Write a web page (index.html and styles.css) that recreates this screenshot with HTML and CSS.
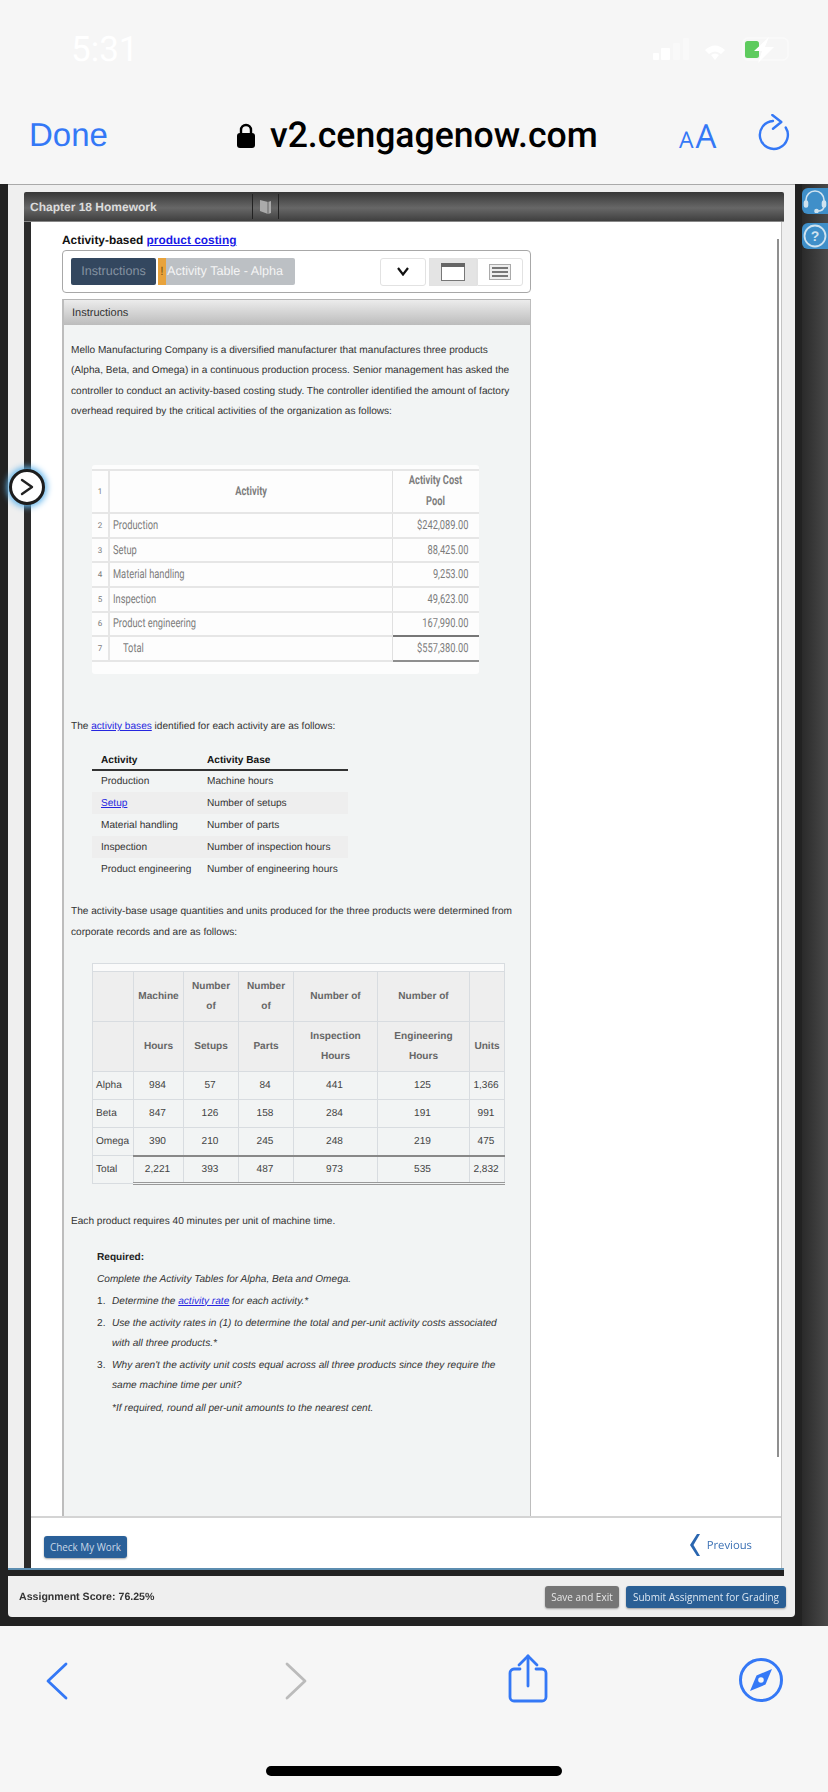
FILE: index.html
```html
<!DOCTYPE html>
<html lang="en">
<head>
<meta charset="utf-8">
<title>Chapter 18 Homework</title>
<link rel="stylesheet" href="styles.css">
</head>
<body>
<header class="topbar">
  <div class="status">
    <span class="time">5:31</span>
    <svg class="status-icons" width="145" height="30" viewBox="0 0 145 30">
      <rect x="3" y="19" width="6" height="7" rx="1" fill="#fff"/>
      <rect x="11" y="14" width="9" height="12" rx="1" fill="#fff"/>
      <rect x="23" y="9" width="7" height="17" rx="1" fill="#f9f9f9"/>
      <rect x="33" y="4" width="6" height="22" rx="1" fill="#f9f9f9"/>
      <path d="M55 16 Q65 7 75 16 L71 20 Q65 15 59 20Z" fill="#fff"/>
      <path d="M61 21 Q65 18 69 21 L65 26Z" fill="#fff"/>
      <rect x="93" y="4" width="45" height="22" rx="5" fill="none" stroke="#fafafa" stroke-width="1.5"/>
      <rect x="95" y="7" width="14" height="17" rx="2.5" fill="#5ecb5e"/>
      <path d="M119 3 L104 17 H112 L108 29 L124 13 H115Z" fill="#fff"/>
    </svg>
  </div>
  <nav class="addressbar">
    <span class="done">Done</span>
    <svg class="lock" width="18" height="25" viewBox="0 0 18 25">
      <path d="M4 11 V7 a5 5 0 0 1 10 0 V11" fill="none" stroke="#000" stroke-width="2.4"/>
      <rect y="10" width="18" height="15" rx="3" fill="#000"/>
    </svg>
    <span class="url">v2.cengagenow.com</span>
    <span class="aa"><span class="aa-small">A</span><span class="aa-big">A</span></span>
    <svg class="reload" width="32" height="42" viewBox="0 0 32 42" fill="none" stroke="#3478f6" stroke-width="2.4" stroke-linecap="round" stroke-linejoin="round">
      <path d="M15 7 A14 14 0 1 0 27.7 13.5"/>
      <path d="M14.3 1 L23.3 8 L15 14.7"/>
    </svg>
  </nav>
</header>

<main class="stage">
  <div class="window">
    <div class="app">
      <div class="app-head">
        <h1 class="app-title">Chapter 18 Homework</h1>
        <div class="book-cell">
          <svg width="13" height="16" viewBox="0 0 13 16"><path d="M1 1 L9 3 L12 2 V14 L9 15 L1 12Z" fill="#aaa"/><path d="M9 3 V15" stroke="#666" stroke-width="1"/></svg>
        </div>
      </div>
      <div class="app-body">
        <div class="scroller">
          <span class="scrollbar"></span>
          <h2 class="topic">Activity-based <a href="#">product costing</a></h2>
          <div class="tabbox">
            <span class="tab tab-on">Instructions</span>
            <span class="tab-flag">!</span>
            <span class="tab tab-off">Activity Table - Alpha</span>
            <span class="tool tool-chev">
              <svg width="12" height="9" viewBox="0 0 12 9" fill="none" stroke="#111" stroke-width="2.2"><path d="M1 1 L6 7.5 L11 1"/></svg>
            </span>
            <span class="tool tool-win">
              <svg width="24" height="18" viewBox="0 0 24 18"><rect x=".5" y=".5" width="23" height="17" fill="#fff" stroke="#777"/><rect width="24" height="4" fill="#666"/></svg>
            </span>
            <span class="tool tool-list">
              <svg width="22" height="16" viewBox="0 0 22 16"><rect x=".5" y=".5" width="21" height="15" fill="#eee" stroke="#aaa"/><path d="M3 4 H19 M3 8 H19 M3 12 H19" stroke="#777" stroke-width="2"/></svg>
            </span>
          </div>
          <section class="panel">
            <div class="panel-head">Instructions</div>
            <div class="panel-body">
              <p class="para para-first">Mello Manufacturing Company is a diversified manufacturer that manufactures three products (Alpha, Beta, and Omega) in a continuous production process. Senior management has asked the controller to conduct an activity-based costing study. The controller identified the amount of factory overhead required by the critical activities of the organization as follows:</p>

              <div class="sheet">
                <table class="pool">
                  <colgroup><col class="c-num"><col class="c-act"><col class="c-amt"></colgroup>
                  <tr class="pool-head"><td class="num">1</td><th><span class="nar nar-c">Activity</span></th><th><span class="nar nar-c">Activity Cost<br>Pool</span></th></tr>
                  <tr><td class="num">2</td><td><span class="nar">Production</span></td><td class="amt"><span class="nar nar-r">$242,089.00</span></td></tr>
                  <tr><td class="num">3</td><td><span class="nar">Setup</span></td><td class="amt"><span class="nar nar-r">88,425.00</span></td></tr>
                  <tr><td class="num">4</td><td><span class="nar">Material handling</span></td><td class="amt"><span class="nar nar-r">9,253.00</span></td></tr>
                  <tr><td class="num">5</td><td><span class="nar">Inspection</span></td><td class="amt"><span class="nar nar-r">49,623.00</span></td></tr>
                  <tr><td class="num">6</td><td><span class="nar">Product engineering</span></td><td class="amt amt-sub"><span class="nar nar-r">167,990.00</span></td></tr>
                  <tr><td class="num">7</td><td class="total-label"><span class="nar">Total</span></td><td class="amt amt-total"><span class="nar nar-r">$557,380.00</span></td></tr>
                </table>
              </div>

              <p class="para para-bases">The <a href="#">activity bases</a> identified for each activity are as follows:</p>

              <table class="bases">
                <tr><th>Activity</th><th>Activity Base</th></tr>
                <tr><td>Production</td><td>Machine hours</td></tr>
                <tr class="stripe"><td><a href="#">Setup</a></td><td>Number of setups</td></tr>
                <tr><td>Material handling</td><td>Number of parts</td></tr>
                <tr class="stripe"><td>Inspection</td><td>Number of inspection hours</td></tr>
                <tr><td>Product engineering</td><td>Number of engineering hours</td></tr>
              </table>

              <p class="para para-usage">The activity-base usage quantities and units produced for the three products were determined from corporate records and are as follows:</p>

              <table class="usage">
                <colgroup><col class="u1"><col class="u2"><col class="u3"><col class="u3"><col class="u4"><col class="u5"><col class="u6"></colgroup>
                <tr class="usage-cap"><td colspan="7"></td></tr>
                <tr class="usage-head"><th></th><th>Machine</th><th>Number<br>of</th><th>Number<br>of</th><th>Number of</th><th>Number of</th><th></th></tr>
                <tr class="usage-head"><th></th><th>Hours</th><th>Setups</th><th>Parts</th><th>Inspection<br>Hours</th><th>Engineering<br>Hours</th><th>Units</th></tr>
                <tr><td class="name">Alpha</td><td>984</td><td>57</td><td>84</td><td>441</td><td>125</td><td>1,366</td></tr>
                <tr><td class="name">Beta</td><td>847</td><td>126</td><td>158</td><td>284</td><td>191</td><td>991</td></tr>
                <tr><td class="name">Omega</td><td>390</td><td>210</td><td>245</td><td>248</td><td>219</td><td>475</td></tr>
                <tr class="usage-total"><td class="name">Total</td><td>2,221</td><td>393</td><td>487</td><td>973</td><td>535</td><td>2,832</td></tr>
              </table>

              <p class="para para-each">Each product requires 40 minutes per unit of machine time.</p>

              <div class="required">
                <p class="req-title">Required:</p>
                <p class="req-lead">Complete the Activity Tables for Alpha, Beta and Omega.</p>
                <ol class="req-list">
                  <li>Determine the <a href="#">activity rate</a> for each activity.*</li>
                  <li>Use the activity rates in (1) to determine the total and per-unit activity costs associated with all three products.*</li>
                  <li>Why aren't the activity unit costs equal across all three products since they require the same machine time per unit?</li>
                </ol>
                <p class="req-note">*If required, round all per-unit amounts to the nearest cent.</p>
              </div>
            </div>
          </section>
        </div>
        <footer class="work-bar">
          <button class="btn btn-check" type="button">Check My Work</button>
          <span class="prev">
            <svg width="11" height="22" viewBox="0 0 11 22"><path d="M10 0 L3.5 11 L10 22 H7 L0 11 L7 0Z" fill="#2a66b0"/></svg>
            Previous
          </span>
        </footer>
      </div>
      <div class="app-rule"></div>
    </div>
    <div class="score-bar">
      <span class="score">Assignment Score: 76.25%</span>
      <span class="score-actions">
        <button class="btn btn-save" type="button">Save and Exit</button>
        <button class="btn btn-submit" type="button">Submit Assignment for Grading</button>
      </span>
    </div>
  </div>

  <aside class="rail">
    <span class="rail-btn">
      <svg width="24" height="24" viewBox="0 0 24 24" fill="none" stroke="#cfe3f0" stroke-width="1.6" stroke-linecap="round"><path d="M3 15 V11 a9 9 0 0 1 18 0 V15"/><rect x="1.5" y="12" width="3" height="6" rx="1.5" fill="#cfe3f0"/><rect x="19.5" y="12" width="3" height="6" rx="1.5" fill="#cfe3f0"/><path d="M21 18 Q20 22 15 22"/><circle cx="13.5" cy="22" r="1.5" fill="#cfe3f0"/></svg>
    </span>
    <span class="rail-btn">
      <svg width="24" height="24" viewBox="0 0 24 24" fill="none" stroke="#cfe3f0" stroke-width="1.8"><circle cx="12" cy="12" r="10.5"/><text x="12" y="17" text-anchor="middle" class="q-mark">?</text></svg>
    </span>
  </aside>

  <span class="handle">
    <svg width="16" height="18" viewBox="0 0 16 18" fill="none" stroke="#222" stroke-width="2.4" stroke-linecap="round" stroke-linejoin="round"><path d="M3 2 L13 9 L3 16"/></svg>
  </span>
</main>

<footer class="toolbar">
  <div class="tool-icons">
    <svg class="ti-back" width="22" height="38" viewBox="0 0 22 38" fill="none" stroke="#3478f6" stroke-width="2.8" stroke-linecap="round" stroke-linejoin="round"><path d="M20 2 L2 19 L20 36"/></svg>
    <svg class="ti-fwd" width="22" height="38" viewBox="0 0 22 38" fill="none" stroke="#bbbbbb" stroke-width="2.8" stroke-linecap="round" stroke-linejoin="round"><path d="M2 2 L20 19 L2 36"/></svg>
    <svg class="ti-share" width="40" height="50" viewBox="0 0 40 50" fill="none" stroke="#3478f6" stroke-width="2.8" stroke-linecap="round" stroke-linejoin="round"><path d="M12 15 H6 a4 4 0 0 0 -4 4 V43 a4 4 0 0 0 4 4 H34 a4 4 0 0 0 4 -4 V19 a4 4 0 0 0 -4 -4 H28"/><path d="M20 2 V32"/><path d="M11 11 L20 2 L29 11"/></svg>
    <svg class="ti-compass" width="44" height="44" viewBox="0 0 44 44"><circle cx="22" cy="22" r="20.5" fill="none" stroke="#3478f6" stroke-width="3"/><path d="M33 11 L26.5 26.5 L11 33 L17.5 17.5Z" fill="#3478f6"/><circle cx="22" cy="22" r="2.8" fill="#f6f6f6"/></svg>
  </div>
  <span class="home"></span>
</footer>
</body>
</html>
```
FILE: styles.css
```css
* { box-sizing: border-box; }
html, body { margin: 0; padding: 0; }
body {
  width: 828px;
  height: 1792px;
  display: flex;
  flex-direction: column;
  font-family: "Liberation Sans", Arial, sans-serif;
  background: #f6f6f6;
  overflow: hidden;
  text-rendering: geometricPrecision;
}

/* Browser chrome */
.topbar { height: 184px; background: #f6f6f6; flex: none; }
.status {
  height: 98px;
  display: flex;
  align-items: center;
  justify-content: space-between;
  padding: 0 33px 0 71px;
}
.time { font-size: 35px; color: #fff; font-weight: 400; font-family: Roboto, sans-serif; }
.addressbar {
  height: 86px;
  padding: 0 0 12px 29px;
  display: flex;
  align-items: center;
}
.done { width: 79px; font-size: 33px; color: #3478f6; }
.lock { margin-left: 129px; flex: none; }
.url {
  margin-left: 15px;
  width: 326px;
  font-family: Roboto, sans-serif;
  font-weight: 500;
  font-size: 35.6px;
  color: #000;
  white-space: nowrap;
}
.aa { margin-left: 83px; width: 40px; color: #3478f6; display: flex; align-items: baseline; gap: 2px; font-family: "Open Sans", sans-serif; }
.aa-small { font-size: 23px; }
.aa-big { font-size: 33px; }
.reload { margin-left: 39px; flex: none; }

/* Page area */
.stage {
  position: relative;
  flex: none;
  height: 1442px;
  background: #222;
  padding-left: 8px;
  display: flex;
}
.window {
  width: 787px;
  height: 1433px;
  background: #efefef;
  border-top: 1px solid #a9a9a9;
  border-radius: 0 0 4px 4px;
  padding-top: 7px;
  display: flex;
  flex-direction: column;
  filter: blur(.45px);
}
.app { margin-right: 11px; flex: none; }
.app-head {
  margin-left: 16px;
  height: 30px;
  display: flex;
  align-items: stretch;
  background: linear-gradient(#373737, #676767 55%, #3f3f3f);
  border-radius: 2px 2px 0 0;
  border-bottom: 1px solid #888;
}
.app-title {
  margin: 0;
  width: 228px;
  padding-left: 6px;
  font-size: 12px;
  font-weight: 700;
  line-height: 30px;
  color: #dcdcdc;
}
.book-cell {
  width: 27px;
  margin: 2px 0;
  border-left: 1px solid #222;
  border-right: 1px solid #222;
  display: flex;
  align-items: center;
  justify-content: center;
}
.app-body {
  margin-left: 16px;
  margin-right: 2px;
  height: 1346px;
  background: #fff;
  border-left: 7px solid #2b2b2b;
  border-right: 1px solid #c4c4c4;
  display: flex;
  flex-direction: column;
}
.scroller {
  position: relative;
  height: 1296px;
  padding-left: 31px;
  border-bottom: 2px solid #d4d4d4;
}
.scrollbar {
  position: absolute;
  right: 2px;
  top: 17px;
  height: 1218px;
  width: 2px;
  background: #8f8f8f;
}
.topic {
  margin: 0;
  height: 28px;
  padding-top: 11px;
  font-size: 11.9px;
  font-weight: 700;
  line-height: 14px;
  color: #111;
}
.topic a { color: #1a1ae6; }
.tabbox {
  width: 469px;
  height: 43px;
  border: 1px solid #a8a8a8;
  border-radius: 4px;
  background: #fff;
  display: flex;
  align-items: center;
  padding-left: 8px;
}
.tab {
  height: 27px;
  font-size: 12.6px;
  line-height: 27px;
  white-space: nowrap;
}
.tab-on {
  width: 85px;
  background: #33475f;
  color: #8491a0;
  text-align: center;
  border-radius: 2px;
  margin-right: 2px;
}
.tab-flag {
  width: 8px;
  height: 27px;
  background: #e8a33c;
  color: #7a5312;
  font-size: 12px;
  line-height: 27px;
  text-align: center;
}
.tab-off {
  width: 129px;
  background: #bcc0c4;
  color: #f4f4f4;
  padding-left: 1px;
  border-radius: 0 2px 2px 0;
}
.tool {
  height: 28px;
  display: flex;
  align-items: center;
  justify-content: center;
  background: #fff;
  border: 1px solid #e2e2e2;
}
.tool-chev { width: 46px; margin-left: 85px; border-radius: 3px; }
.tool-win { width: 48px; margin-left: 3px; background: #e4e4e4; }
.tool-list { width: 46px; border-radius: 0 3px 3px 0; }

.panel {
  margin-top: 6px;
  width: 469px;
  height: 1217px;
  background: #f2f4f4;
  border-left: 2px solid #bdbdbd;
  border-right: 1px solid #bdbdbd;
  border-top: 1px solid #b5b5b5;
}
.panel-head {
  height: 25px;
  padding-left: 8px;
  font-size: 11px;
  line-height: 27px;
  color: #333;
  background: linear-gradient(#ececec, #bcbcbc);
}
.panel-body { padding-left: 7px; }
.panel-body a { color: #2626e0; }
.para {
  margin: 0;
  width: 445px;
  font-size: 10.1px;
  line-height: 20.3px;
  color: #333;
}
.para-first { padding-top: 16px; }
.para-bases { margin-top: 43px; }
.para-usage { margin-top: 22px; }
.para-each { margin-top: 27px; }

/* Cost pool sheet */
.sheet {
  margin: 43px 0 0 21px;
  width: 387px;
  height: 209px;
  background: #fdfdfd;
  border-radius: 3px;
  padding-top: 4px;
}
.pool {
  width: 387px;
  table-layout: fixed;
  border-collapse: collapse;
  font-family: Roboto, sans-serif;
  font-size: 12.4px;
  color: #7b7b7b;
}
.c-num { width: 17px; }
.c-act { width: 283px; }
.c-amt { width: 87px; }
.pool td, .pool th { height: 24.6px; border: 1px solid #e6e6e6; border-width: 0 0 2px 0; padding: 0 3px; }
.pool td:nth-child(2), .pool th:nth-child(2) { border-right: 1px solid #e0e0e0; }
.pool .num { font-size: 8px; text-align: center; padding: 0; border-right: 2px solid #e6e6e6; }
.pool th { font-weight: 700; color: #7d7d7d; line-height: 20.3px; text-align: center; }
.pool-head td, .pool-head th { height: 43px; border-top: 2px solid #e6e6e6; }
.pool .amt { text-align: right; padding-right: 11px; }
.pool .amt-sub { border-bottom: 2px solid #777; }
.pool .amt-total { border-bottom: 2px solid #8f8f8f; }
.total-label { padding-left: 13px !important; }
.nar { display: inline-block; white-space: nowrap; transform: scaleX(.75); transform-origin: left center; }
.nar-c { transform-origin: center center; }
.nar-r { transform-origin: right center; }

/* Activity bases */
.bases {
  margin: 11px 0 0 21px;
  width: 256px;
  border-collapse: collapse;
  table-layout: fixed;
  font-size: 10.1px;
  color: #333;
}
.bases th {
  height: 22px;
  text-align: left;
  color: #111;
  border-bottom: 2px solid #333;
  padding: 3px 0 0 9px;
}
.bases td { height: 22px; padding: 0 0 0 9px; }
.bases th:first-child, .bases td:first-child { width: 107px; }
.bases th:last-child, .bases td:last-child { padding-left: 8px; }
.stripe td { background: #eeeeee; }

/* Usage table */
.usage {
  margin: 20px 0 0 21px;
  width: 412px;
  table-layout: fixed;
  border-collapse: collapse;
  font-size: 10.1px;
  color: #444;
}
.u1 { width: 41px; }
.u2 { width: 50px; }
.u3 { width: 55px; }
.u4 { width: 84px; }
.u5 { width: 92px; }
.u6 { width: 35px; }
.usage td, .usage th { border: 1px solid #d8dce0; padding: 0; text-align: center; height: 28px; }
.usage td { padding-right: 2px; }
.usage-cap td { height: 8px; background: #fafafa; }
.usage-head th {
  height: 50px;
  padding-top: 1px;
  background: #eeeeee;
  color: #666;
  font-weight: 700;
  line-height: 20.3px;
}
.usage .name { text-align: left; padding-left: 3px; padding-right: 0; }
.usage-total td { border-top: 2px solid #888; border-bottom: 3px double #999; }
.usage-total .name { border-top: 1px solid #d8dce0; border-bottom: 1px solid #d8dce0; }

/* Required */
.required { margin: 16px 0 0 26px; width: 408px; font-size: 10.1px; color: #333; }
.required p { margin: 0; }
.req-title { font-weight: 700; line-height: 20px; color: #222; }
.req-lead { font-style: italic; margin-top: 2px !important; line-height: 20.3px; }
.req-list { margin: 1px 0 0; padding: 0 0 0 15px; font-style: italic; line-height: 20.3px; list-style: none; counter-reset: req; }
.req-list li { margin-bottom: 1.7px; counter-increment: req; }
.req-list li::before { content: counter(req) "."; display: inline-block; width: 15px; margin-left: -15px; font-style: normal; }
.required .req-note { margin-top: 2px; padding-left: 15px; font-style: italic; line-height: 20.3px; }

/* Footer of the assignment frame */
.work-bar {
  height: 48px;
  padding: 0 29px 0 13px;
  display: flex;
  align-items: center;
  justify-content: space-between;
}
.btn {
  border: 0;
  padding: 0;
  height: 22px;
  border-radius: 3px;
  font-family: "Open Sans", sans-serif;
  font-size: 10px;
  box-shadow: 0 1px 2px rgba(0,0,0,.35);
}
.btn-check { width: 83px; margin-top: 10px; background: #2a6099; color: #c9d8e8; font-size: 9.9px; }
.prev { display: flex; align-items: center; gap: 6px; margin-top: 6px; font-family: "Open Sans", sans-serif; font-size: 11.3px; color: #3d72b5; }
.app-rule {
  margin-left: 0;
  height: 8px;
  background: #222;
  border-top: 2px solid #5c8db0;
}
.score-bar {
  flex: 1;
  display: flex;
  align-items: center;
  justify-content: space-between;
  padding: 0 9px 0 11px;
}
.score { font-size: 10.6px; font-weight: 700; color: #333; }
.score-actions { display: flex; gap: 7px; }
.btn-save { width: 74px; background: #757575; color: #e6e6e6; }
.btn-submit { width: 160px; background: #2a5f95; color: #dbe6f1; }

/* Right rail */
.rail {
  flex: 1;
  margin-left: 7px;
  padding-top: 4px;
  background: linear-gradient(90deg, #2a2a2a, #4a4a4a);
  display: flex;
  flex-direction: column;
  gap: 9px;
  align-items: flex-end;
  height: 1442px;
}
.rail-btn {
  width: 26px;
  height: 26px;
  background: #3f8fc9;
  border-radius: 6px 0 0 6px;
  display: flex;
  align-items: center;
  justify-content: flex-start;
  padding-left: 1px;
}
.q-mark { font: 700 14px "Liberation Sans", sans-serif; fill: #cfe3f0; stroke: none; }

.handle {
  position: absolute;
  left: 9px;
  top: 285px;
  width: 36px;
  height: 36px;
  border-radius: 50%;
  background: #fff;
  border: 3px solid #1d1d1d;
  box-shadow: 0 0 6px 2px #5fb4ec;
  display: flex;
  align-items: center;
  justify-content: center;
}

/* Bottom toolbar */
.toolbar { flex: none; height: 166px; background: #f6f6f6; display: flex; flex-direction: column; align-items: center; }
.tool-icons {
  width: 828px;
  height: 140px;
  padding: 28px 0 0 46px;
  display: flex;
  align-items: flex-start;
}
.ti-back { margin-top: 8px; }
.ti-fwd { margin: 8px 0 0 217px; }
.ti-share { margin-left: 201px; }
.ti-compass { margin: 4px 0 0 191px; }
.home { width: 296px; height: 10px; background: #000; border-radius: 5px; }
```
